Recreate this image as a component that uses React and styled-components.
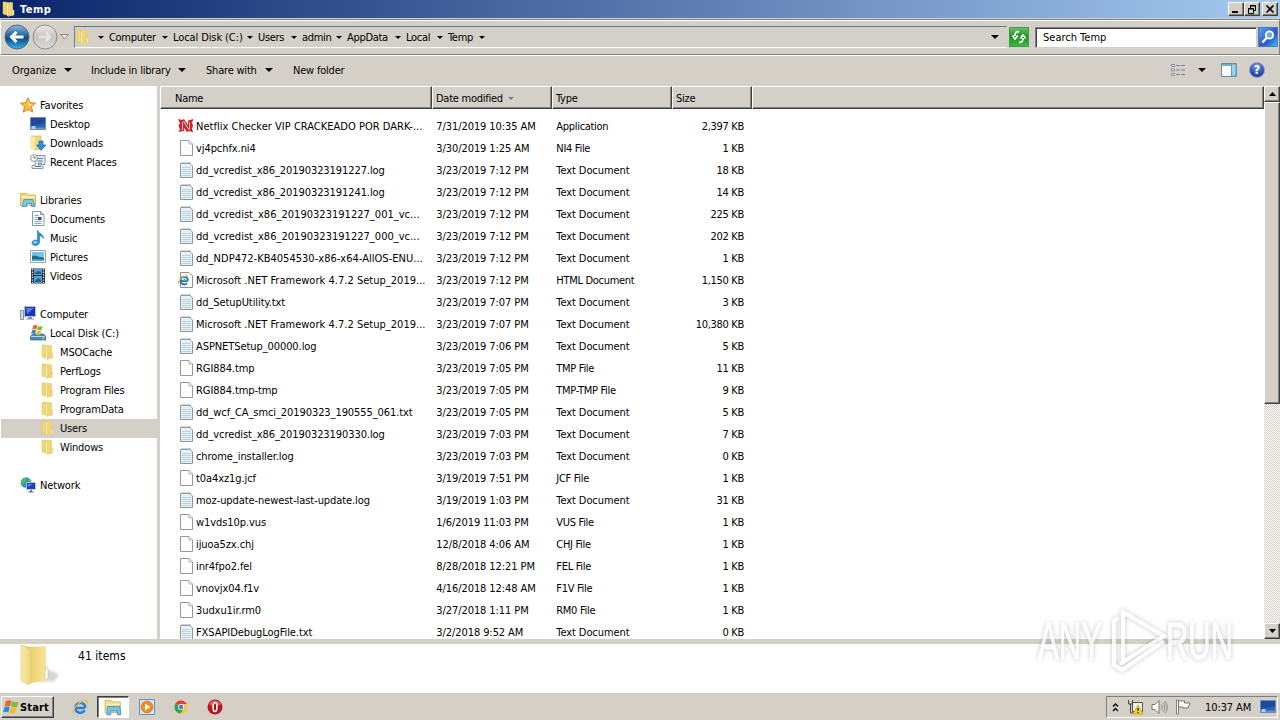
import styled, { createGlobalStyle, css } from "styled-components";

const GlobalStyle = createGlobalStyle`
  * {
    box-sizing: border-box;
  }
  body {
    margin: 0;
    overflow: hidden;
    background: #d4d0c8;
    font-family: "DejaVu Sans Condensed", "DejaVu Sans", sans-serif;
    font-stretch: condensed;
    font-size: 11px;
    letter-spacing: -0.2px;
    color: #000;
  }
  svg {
    display: block;
    flex: none;
    overflow: visible;
  }
`;

const raised = css`
  border: 1px solid;
  border-color: #fff #404040 #404040 #fff;
  box-shadow: inset -1px -1px 0 #808080;
  background: #d4d0c8;
`;

const Window = styled.div`
  width: 1280px;
  height: 720px;
  display: flex;
  flex-direction: column;
  overflow: hidden;
  white-space: nowrap;
`;

const TitleBar = styled.div`
  height: 18px;
  flex: none;
  display: flex;
  align-items: center;
  padding: 0 2px 0 1px;
  background: linear-gradient(90deg, #0a246a, #a6caf0);
`;
const Title = styled.span`
  flex: 1;
  margin-left: 3px;
  color: #fff;
  font-weight: bold;
  letter-spacing: 0.5px;
`;
const CaptionButton = styled.div`
  ${raised}
  width: 16px;
  height: 14px;
  margin-left: ${(p) => p.$gap || 0}px;
  display: flex;
  align-items: center;
  justify-content: center;
`;

const NavBar = styled.div`
  height: 36px;
  flex: none;
  margin-top: 1px;
  border: 1px solid #808080;
  border-left-color: #fff;
  box-shadow: inset 0 1px 0 #fff, 0 1px 0 #fff;
  display: flex;
  align-items: center;
  padding: 0 1px 0 3px;
`;
const NavGap = styled.div`
  width: ${(p) => p.$w}px;
  flex: none;
`;
const AddressBox = styled.div`
  flex: 1;
  height: 22px;
  margin: 0 2px 0 5px;
  padding-right: 7px;
  border: 1px solid;
  border-color: #5f7a80 #d4d0c8 #fff #6d8388;
  display: flex;
  align-items: center;
`;
const Crumb = styled.span`
  width: ${(p) => p.$w}px;
  flex: none;
  display: flex;
  align-items: center;
  justify-content: space-between;
  padding-right: 5px;
  letter-spacing: ${(p) => p.$ls ?? -0.3}px;
`;
const Caret = styled.i`
  flex: none;
  width: 0;
  height: 0;
  border: ${(p) => p.$s || 3}px solid transparent;
  border-top-color: ${(p) => p.$c || "#000"};
  border-bottom: 0;
  margin-left: ${(p) => p.$ml || 0}px;
`;
const HistoryCaret = styled(Caret)`
  margin-left: auto;
`;
const RefreshButton = styled.div`
  width: 20px;
  height: 20px;
  flex: none;
  margin-right: 6px;
  display: flex;
  align-items: center;
  justify-content: center;
  background: linear-gradient(#63c165, #1c8f20 50%, #36c03a);
  border: 1px solid #4d9457;
`;
const SearchBox = styled.div`
  width: 222px;
  height: 21px;
  flex: none;
  background: #fff;
  border: 1px solid #808080;
  border-right-color: #d4d0c8;
  border-bottom-color: #d4d0c8;
  box-shadow: inset 1px 1px 0 #404040;
  padding: 3px 0 0 7px;
  line-height: 14px;
  letter-spacing: 0;
`;
const SearchButton = styled.div`
  width: 20px;
  height: 20px;
  flex: none;
  margin-left: 1px;
  border: 1px solid #4477c4;
  background: linear-gradient(135deg, #5ba4ee, #2a55c8 60%, #30c8ea);
  display: flex;
  align-items: center;
  justify-content: center;
`;

const ToolBar = styled.div`
  height: 30px;
  margin-bottom: 1px;
  flex: none;
  display: flex;
  align-items: center;
  padding: 0 15px 0 12px;
`;
const ToolItem = styled.div`
  width: ${(p) => p.$w}px;
  display: flex;
  align-items: center;
  justify-content: space-between;
  margin-right: ${(p) => p.$mr}px;
  letter-spacing: ${(p) => p.$ls ?? -0.2}px;
`;
const ToolIcons = styled.div`
  margin-left: auto;
  display: flex;
  align-items: center;
`;

const Body = styled.div`
  height: 553px;
  flex: none;
  display: flex;
  background: #fff;
`;
const Sidebar = styled.div`
  width: 160px;
  flex: none;
  padding-top: 10px;
  border-right: 3px solid #d4d0c8;
`;
const TreeRow = styled.div`
  height: 19px;
  margin-left: 1px;
  padding-left: ${(p) => 19 + p.$level * 10}px;
  display: flex;
  align-items: center;
  gap: 4px;
  background: ${(p) => (p.$selected ? "#d4d0c8" : "none")};
  letter-spacing: -0.15px;
`;
const TreeIcon = styled.span`
  width: 16px;
  height: 18px;
`;

const FileArea = styled.div`
  flex: 1;
  min-width: 0;
  display: flex;
  flex-direction: column;
  overflow: hidden;
`;
const HeaderRow = styled.div`
  height: 23px;
  flex: none;
  display: flex;
  background: #d4d0c8;
`;
const HeaderCell = styled.div`
  ${(p) => (p.$w ? `width: ${p.$w}px;` : "flex: 1;")}
  padding: 1px 0 0 ${(p) => p.$pl || 4}px;
  display: flex;
  align-items: center;
  border: 1px solid;
  border-color: #fff #404040 #404040 #fff;
  box-shadow: inset -1px -1px 0 #808080;
  letter-spacing: -0.25px;
`;
const FileRows = styled.div`
  padding-top: 6px;
`;
const FileRow = styled.div`
  height: 22px;
  flex: none;
  display: grid;
  grid-template-columns: 16px 241px 120px 109px 80px;
  align-items: center;
  padding-left: 18px;
`;
const Cell = styled.span`
  padding-left: ${(p) => p.$pl ?? 1.3}px;
  text-align: ${(p) => p.$align || "left"};
  letter-spacing: ${(p) => p.$ls ?? -0.08}px;
`;

const ScrollBar = styled.div`
  width: 16px;
  flex: none;
  display: flex;
  flex-direction: column;
  background: repeating-conic-gradient(#fff 0 25%, #d4d0c8 0 50%) 0 0 / 2px 2px;
`;
const ScrollButton = styled.div`
  ${raised}
  height: 16px;
  margin-top: ${(p) => (p.$end ? "auto" : 0)};
  display: flex;
  align-items: center;
  justify-content: center;
`;
const ScrollThumb = styled.div`
  ${raised}
  height: 302px;
`;

const Details = styled.div`
  height: 54px;
  flex: none;
  display: flex;
  background: #fff;
  border-top: 5px solid #d4d0c8;
  padding-left: 18px;
`;
const ItemCount = styled.span`
  margin: 4px 0 0 18px;
  font-size: 12px;
  line-height: 16px;
  letter-spacing: 0.05px;
`;

const TaskBar = styled.div`
  flex: 1;
  display: flex;
  align-items: center;
  padding: 1px 2px 0 1px;
  background: #d4d0c8;
  border-top: 1px solid #fff;
  margin-top: -1px;
`;
const StartButton = styled.div`
  ${raised}
  width: 53px;
  height: 22px;
  display: flex;
  align-items: center;
  gap: 1px;
  padding-left: 1px;
  font-weight: bold;
  letter-spacing: 0.15px;
`;
const TaskItem = styled.div`
  width: 32px;
  height: 22px;
  margin-left: ${(p) => p.$ml ?? 2}px;
  display: flex;
  align-items: center;
  justify-content: center;
  ${(p) =>
    p.$active &&
    css`
      background: #fff;
      border: 1px solid;
      border-color: #404040 #fff #fff #404040;
      box-shadow: inset 1px 1px 0 #808080;
    `}
`;
const Tray = styled.div`
  width: 172px;
  height: 22px;
  margin-left: auto;
  display: flex;
  align-items: center;
  gap: 8px;
  padding-left: 5px;
  border: 1px solid;
  border-color: #808080 #fff #fff #808080;
`;
const Clock = styled.span`
  margin-left: 6px;
  width: 47px;
  letter-spacing: -0.1px;
`;

const Watermark = styled.div`
  position: absolute;
  left: 1036px;
  top: 606px;
  filter: drop-shadow(0 0 2.5px rgba(0, 0, 0, 0.3));
  opacity: 0.75;
`;

const HelpMark = styled.div`
  width: 16px;
  height: 16px;
  border-radius: 50%;
  border: 1px solid #8d98b4;
  background: radial-gradient(circle at 50% 25%, #7fa3ea, #2346ac 65%);
  color: #fff;
  font-size: 12px;
  font-weight: bold;
  line-height: 14px;
  text-align: center;
  letter-spacing: 0;
`;

/* ---------- icons ---------- */

const Svg = ({ w = 16, h = 16, box, children }) => (
  <svg width={w} height={h} viewBox={box || "0 0 16 16"} fill="none">
    {children}
  </svg>
);

const Folder = () => (
  <Svg>
    <path d="M6 1.500h5.500v12.500H6z" fill="#f3dc84" stroke="#e0c05c" strokeWidth=".5" />
    <path d="M2 1h3.500v13L2 13z" fill="#f2d974" stroke="#dfbb55" strokeWidth=".5" />
    <path d="M5.500 1.500L7.500 3v12.500l-2-1.500z" fill="#fdf3c0" stroke="#d9b555" strokeWidth=".5" />
    <path d="M11.500 2v6l1.500 1.500v4.500L7.500 15.500V3z" fill="#f0d372" />
    <path d="M11.500 9.500l1.500-.5v5l-1.500.5z" fill="#fff6cd" stroke="#c9b064" strokeWidth=".4" />
  </Svg>
);

const BigFolder = () => (
  <Svg w={42} h={44} box="0 0 42 44">
    <defs>
      <linearGradient id="bf1" x1="0" x2="1">
        <stop offset="0" stopColor="#e3c25a" />
        <stop offset="1" stopColor="#f8e79c" />
      </linearGradient>
      <linearGradient id="bf2" x1="0" x2="1">
        <stop offset="0" stopColor="#f9ecb0" />
        <stop offset="1" stopColor="#eed47a" />
      </linearGradient>
      <filter id="soft"><feGaussianBlur stdDeviation="1.5" /></filter>
    </defs>
    <path d="M24 22l17 9-5 6-14 1z" fill="#aaa" opacity=".5" filter="url(#soft)" />
    <path d="M3 1l8 2 17-1v22l2 3v9l-3 1-15 2z" fill="url(#bf1)" />
    <path d="M3 1l7 3c2 1 3 2 3 5v28c0 3-1 4-3 3.500L3 37z" fill="url(#bf2)" stroke="#dfc66e" strokeWidth=".6" />
    <path d="M28 22l2 4v8l-3 2v-8z" fill="#fffbe6" stroke="#c6cfae" strokeWidth=".6" />
  </Svg>
);

const Star = () => (
  <Svg>
    <path d="M8 .8l2.200 4.900 5.300.5-4 3.500 1.200 5.400L8 12.300l-4.700 2.800 1.200-5.400-4-3.500 5.300-.5z" fill="#fdba3d" stroke="#d8832a" />
    <path d="M8 3l1.300 3.800 3.400.4-3 1.800L8 8z" fill="#ffe892" />
  </Svg>
);
const Desktop = () => (
  <Svg>
    <path d="M.5 1.500h15v12H.5z" fill="#2563bd" stroke="#6a8cae" />
    <path d="M1 2h14v5C9 9 5 8 1 11z" fill="#1f489f" />
    <path d="M1 11.500h14V13H1z" fill="#6d93b5" />
    <path d="M1.500 10h4v3h-4z" fill="#a9d2e8" />
  </Svg>
);
const Downloads = () => (
  <Svg>
    <path d="M1 1h10v13l-6 1-4-2z" fill="#f1d777" stroke="#d2ae4b" strokeWidth=".6" />
    <path d="M1 1l4 2v12l-4-2z" fill="#fbecad" />
    <path d="M9 6h4v4h3l-5 5.500L6.500 10H9z" fill="#2f91d8" stroke="#1c65a8" strokeWidth=".7" />
  </Svg>
);
const Recent = () => (
  <Svg>
    <path d="M6 1.500h9v9h-2v4H2v-3h3z" fill="#dfeaf0" stroke="#8498a5" />
    <path d="M7.500 4.500h5M7.500 7h5M5 12.500h6" stroke="#5f7e92" />
    <path d="M8.500 9h3v2h-3z" stroke="#58788f" strokeWidth=".8" />
    <circle cx="4" cy="4" r="3.400" fill="#f5f8fa" stroke="#8e9ba6" />
    <path d="M4 2v2h2" stroke="#55626e" strokeWidth=".8" />
  </Svg>
);
const Libraries = () => (
  <Svg>
    <path d="M.5 1.500h6l1 1.500h8v10.500H.5z" fill="#f4db7b" stroke="#cfab45" strokeWidth=".8" />
    <path d="M1 5h14" stroke="#fff3b5" strokeWidth="1.500" />
    <path d="M4 7.500h9l2 7h-3.500v-3h-5v3H2z" fill="#7ac5ea" stroke="#3a8ec4" strokeWidth=".8" />
  </Svg>
);
const Documents = () => (
  <Svg>
    <path d="M2.500.5h8l3.500 3.500v10.500H2.500z" fill="#fff" stroke="#8796a6" />
    <path d="M10.500.5v3h3" stroke="#8796a6" />
    <path d="M4.500 4.500h4M4.500 6.500h3M4.500 8.500h3M4.500 10.500h7M4.500 12.500h7" stroke="#86a4c2" />
    <path d="M8 6h3.500v3H8z" fill="#224e8f" />
  </Svg>
);
const Music = () => (
  <Svg>
    <path d="M8 .5c0 3 5.500 3 5.500 8-1-2.500-3-2.500-4-2.500v6c0 4.500-7.500 4.500-7.500.8C2 10 6 9.500 7.500 10.500V.5z" fill="#2c93d5" stroke="#1b6faf" strokeWidth=".6" />
    <ellipse cx="5.300" cy="12.300" rx="2.200" ry="1.400" fill="#85d1f5" />
  </Svg>
);
const Pictures = () => (
  <Svg>
    <path d="M.5 1.500h15v12H.5z" fill="#fff" stroke="#93a3b1" />
    <path d="M2 3h12v9H2z" fill="#77c2e8" />
    <path d="M2 7c3-2 6 1.500 12 1.500V12H2z" fill="#216e76" />
    <path d="M2 10.500c5-1 8 0 12 0V12H2z" fill="#4da6c8" />
  </Svg>
);
const Videos = () => (
  <Svg>
    <path d="M1 .5h14v15H1z" fill="#26313b" />
    <path d="M4 1h8v6H4zM4 8h8v7H4z" fill="#4da0cf" />
    <path d="M5 5l3-2 3 1v2H5zM5 13l3-3 3 2v2H5z" fill="#245e83" />
    <path d="M2.500 1v14M13.500 1v14" stroke="#dfe6ea" strokeWidth="1.300" strokeDasharray="1.300 1.300" />
  </Svg>
);
const Computer = () => (
  <Svg>
    <path d="M.5 4.500h3v9h-3z" fill="#d4dbe0" stroke="#8795a0" />
    <path d="M4.500 .5h11v10h-11z" fill="#1b36b5" stroke="#b4bfcb" />
    <path d="M6 2h8L7 8z" fill="#5580e4" />
    <path d="M8 11h4v2H8zM6 12.500h8v1H6z" fill="#8a96a3" />
  </Svg>
);
const Flag = () => (
  <Svg>
    <path d="M3 2c2-1.300 4-.8 5.500.1L7 7.500c-1.600-1-3.500-1-5.300 0z" fill="#ed6327" />
    <path d="M9 2.500c2 1 4.500.8 6.500 0L14 8c-2 .8-4 .6-5.800-.4z" fill="#83b936" />
    <path d="M1.500 8.300C3.300 7.200 5 7.300 6.800 8.300l-1.500 5.200c-1.600-1-3.500-1-5.300 0z" fill="#2f88d8" />
    <path d="M7.900 8.500c1.700 1 3.700 1 5.800.2l-1.600 5.300c-2 .8-3.900.7-5.600-.3z" fill="#f7bd27" />
  </Svg>
);
const Disk = () => (
  <Svg>
    <path d="M.5 11l3-2h10l2 2v4H.5z" fill="#4d88b4" stroke="#33658b" strokeWidth=".7" />
    <path d="M1 11.500h14" stroke="#b7d6ea" />
    <circle cx="13" cy="13.500" r=".9" fill="#92f28a" />
    <g transform="translate(1 -1) scale(.75)">
      <Flag />
    </g>
  </Svg>
);
const Network = () => (
  <Svg>
    <circle cx="6" cy="5.500" r="5.300" fill="#2992d4" />
    <path d="M3 1.500c3-1 4 0 3 2S3 5 3.500 8C1 7 .5 4 3 1.500zM8 2l3 2-2 3z" fill="#5bbf47" />
    <path d="M6.500 5.500h9v7h-9z" fill="#1c3fbc" stroke="#b9c6d4" />
    <path d="M8 7h5L8 10z" fill="#5f8aea" />
    <path d="M10 13h2v1.500h2v1H8v-1h2z" fill="#687785" />
  </Svg>
);

const BlankFile = () => (
  <Svg>
    <path d="M2.500.5h8.500l3.500 3.500v11.500h-12z" fill="#fdfdfd" stroke="#989898" />
    <path d="M11 .5V4h3.500" fill="#eee" stroke="#a5a5a5" strokeWidth=".8" />
  </Svg>
);
const TextFile = () => (
  <Svg>
    <path d="M2.500 1.500h9.500l2.500 2.500v11.500h-12z" fill="#e8f1f5" stroke="#8b979d" />
    <path d="M4 5.500h9M4 7.500h9M4 9.500h9M4 11.500h9M4 13.500h9" stroke="#b6cfda" strokeWidth=".9" />
    <path d="M3.500 1h9" stroke="#9aa2a6" strokeWidth="2" strokeDasharray="1 1" />
  </Svg>
);
const HtmlFile = () => (
  <Svg>
    <path d="M2.500.5h8.500l3.500 3.500v11.500h-12z" fill="#fff" stroke="#8f8f8f" />
    <path d="M9.800 9H3M9 11.300C6 13.800 2 11.500 2.500 8.100c.6-4.100 7.500-4.700 7.400.6" stroke="#2675cc" strokeWidth="2" />
    <path d="M.5 12C-.5 9 5.500 3.500 10 3.500" stroke="#e9b52c" strokeWidth="1.200" />
    <path d="M6.500 6.500l3 2.500h-5z" fill="#69b63f" />
  </Svg>
);
const NetflixFile = () => (
  <Svg>
    <path d="M0 1l4 1 2-1 4 6V2.500L15.500 1 14 4.500 15 8l-1 3 1.200 3.500-4-1.500L9 14 6 10v3L.5 14 2 11 .5 8 2 5z" fill="#d3222b" />
    <path d="M4.500 4v8M5.500 3l5.500 9M11.500 4v7" stroke="#fff" strokeWidth=".8" />
  </Svg>
);

const Explorer = () => (
  <Svg w={18} h={18}>
    <path d="M1 2h5l1 1.500h7.500v9.500H1z" fill="#f6df86" stroke="#cda646" strokeWidth=".7" />
    <path d="M2 5.500h12" stroke="#fff6c8" />
    <path d="M3 7.500h11l1 7.500h-3v-3.500H6V15H2.500z" fill="#74c1ea" stroke="#438fbd" strokeWidth=".7" />
  </Svg>
);
const IE = () => (
  <Svg>
    <path d="M13 9H4.500M12.700 11.300C9.500 16 3 13.500 3.500 8.500c.6-6 10-6 9.900.3" stroke="#2583d4" strokeWidth="2.600" />
    <path d="M2 14.500C-1 11 9 0 14.500 1.500c1.300.7.8 2.200.2 3" stroke="#efbd35" strokeWidth="1.300" />
  </Svg>
);
const MediaPlayer = () => (
  <Svg>
    <path d="M.5.500h15v15H.5z" fill="#d5e8f7" stroke="#5f93c7" />
    <circle cx="8" cy="8" r="6" fill="#f58a1f" stroke="#d96d10" strokeWidth=".6" />
    <path d="M6 4.500l5.500 3.500L6 11.500z" fill="#fff" />
  </Svg>
);
const Chrome = () => (
  <Svg w={14} h={14}>
    <circle cx="8" cy="8" r="7.500" fill="#f7cb32" />
    <path d="M8 8L1.500 4.200A7.500 7.500 0 0 1 14.600 4.500H8z" fill="#dd4437" />
    <path d="M8 8L1.500 4.200A7.500 7.500 0 0 0 7.600 15.500L11 9.700z" fill="#31a552" />
    <circle cx="8" cy="8" r="3.500" fill="#fff" />
    <circle cx="8" cy="8" r="2.700" fill="#427fed" />
  </Svg>
);
const Opera = () => (
  <Svg>
    <circle cx="8" cy="8" r="7.500" fill="#b8161c" />
    <path d="M2 5a7 7 0 0 1 12 0C11 8 5 8 2 5z" fill="#e45a58" />
    <ellipse cx="8" cy="8" rx="1.900" ry="4.500" fill="#a30c12" stroke="#fff" strokeWidth="1.700" />
  </Svg>
);

const NavArrow = ({ active }) => (
  <Svg w={26} h={26} box="0 0 26 26">
    <defs>
      <linearGradient id="nav" x2="0" y2="1">
        <stop offset="0" stopColor="#8fb9d8" />
        <stop offset=".45" stopColor="#22659f" />
        <stop offset=".55" stopColor="#0c4b87" />
        <stop offset="1" stopColor="#37b6e4" />
      </linearGradient>
      <linearGradient id="navOff" x2="0" y2="1">
        <stop offset="0" stopColor="#ecebe8" />
        <stop offset=".5" stopColor="#c6c4bf" />
        <stop offset="1" stopColor="#dedcd8" />
      </linearGradient>
    </defs>
    <circle cx="13" cy="13" r="12" fill={active ? "url(#nav)" : "url(#navOff)"} stroke={active ? "#4b6a83" : "#908e8a"} />
    {active ? (
      <path d="M19.500 13H8M12.500 8l-5 5 5 5" stroke="#fff" strokeWidth="3" />
    ) : (
      <path d="M7 13h11M13.500 8.500L18 13l-4.500 4.500" stroke="#e6e4e1" strokeWidth="2.500" />
    )}
  </Svg>
);

const icons = { blank: BlankFile, text: TextFile, html: HtmlFile, netflix: NetflixFile };

const crumbs = [
  ["Computer", 64],
  ["Local Disk (C:)", 85, -0.1],
  ["Users", 44],
  ["admin", 45],
  ["AppData", 59],
  ["Local", 42],
  ["Temp", 42],
];

const tree = [
  ["Favorites", 0, Star],
  ["Desktop", 1, Desktop],
  ["Downloads", 1, Downloads],
  ["Recent Places", 1, Recent],
  null,
  ["Libraries", 0, Libraries],
  ["Documents", 1, Documents],
  ["Music", 1, Music],
  ["Pictures", 1, Pictures],
  ["Videos", 1, Videos],
  null,
  ["Computer", 0, Computer],
  ["Local Disk (C:)", 1, Disk],
  ["MSOCache", 2, Folder],
  ["PerfLogs", 2, Folder],
  ["Program Files", 2, Folder],
  ["ProgramData", 2, Folder],
  ["Users", 2, Folder],
  ["Windows", 2, Folder],
  null,
  ["Network", 0, Network],
];

const files = [
  ["netflix", "Netflix Checker VIP CRACKEADO POR DARK-...", "7/31/2019 10:35 AM", "Application", "2,397 KB"],
  ["blank", "vj4pchfx.ni4", "3/30/2019 1:25 AM", "NI4 File", "1 KB"],
  ["text", "dd_vcredist_x86_20190323191227.log", "3/23/2019 7:12 PM", "Text Document", "18 KB"],
  ["text", "dd_vcredist_x86_20190323191241.log", "3/23/2019 7:12 PM", "Text Document", "14 KB"],
  ["text", "dd_vcredist_x86_20190323191227_001_vc...", "3/23/2019 7:12 PM", "Text Document", "225 KB"],
  ["text", "dd_vcredist_x86_20190323191227_000_vc...", "3/23/2019 7:12 PM", "Text Document", "202 KB"],
  ["text", "dd_NDP472-KB4054530-x86-x64-AllOS-ENU...", "3/23/2019 7:12 PM", "Text Document", "1 KB"],
  ["html", "Microsoft .NET Framework 4.7.2 Setup_2019...", "3/23/2019 7:12 PM", "HTML Document", "1,150 KB"],
  ["text", "dd_SetupUtility.txt", "3/23/2019 7:07 PM", "Text Document", "3 KB"],
  ["text", "Microsoft .NET Framework 4.7.2 Setup_2019...", "3/23/2019 7:07 PM", "Text Document", "10,380 KB"],
  ["text", "ASPNETSetup_00000.log", "3/23/2019 7:06 PM", "Text Document", "5 KB"],
  ["blank", "RGI884.tmp", "3/23/2019 7:05 PM", "TMP File", "11 KB"],
  ["blank", "RGI884.tmp-tmp", "3/23/2019 7:05 PM", "TMP-TMP File", "9 KB"],
  ["text", "dd_wcf_CA_smci_20190323_190555_061.txt", "3/23/2019 7:05 PM", "Text Document", "5 KB"],
  ["text", "dd_vcredist_x86_20190323190330.log", "3/23/2019 7:03 PM", "Text Document", "7 KB"],
  ["text", "chrome_installer.log", "3/23/2019 7:03 PM", "Text Document", "0 KB"],
  ["blank", "t0a4xz1g.jcf", "3/19/2019 7:51 PM", "JCF File", "1 KB"],
  ["text", "moz-update-newest-last-update.log", "3/19/2019 1:03 PM", "Text Document", "31 KB"],
  ["blank", "w1vds10p.vus", "1/6/2019 11:03 PM", "VUS File", "1 KB"],
  ["blank", "ijuoa5zx.chj", "12/8/2018 4:06 AM", "CHJ File", "1 KB"],
  ["blank", "inr4fpo2.fel", "8/28/2018 12:21 PM", "FEL File", "1 KB"],
  ["blank", "vnovjx04.f1v", "4/16/2018 12:48 AM", "F1V File", "1 KB"],
  ["blank", "3udxu1ir.rm0", "3/27/2018 1:11 PM", "RM0 File", "1 KB"],
  ["text", "FXSAPIDebugLogFile.txt", "3/2/2018 9:52 AM", "Text Document", "0 KB"],
];

// cut names run a little wider than the short ones
const nameSpacing = (name) => (name.endsWith("...") ? 0.02 : -0.08);
const typeSpacing = (type) => (type === "Text Document" ? -0.08 : -0.3);

export default function App() {
  return (
    <>
      <GlobalStyle />
      <Window>
        <TitleBar>
          <Folder />
          <Title>Temp</Title>
          <CaptionButton>
            <Svg w={10} h={8} box="0 0 10 8"><path d="M1 6h6v2H1z" fill="#000" /></Svg>
          </CaptionButton>
          <CaptionButton>
            <Svg w={10} h={9} box="0 0 10 9">
              <path d="M3.500 3V.5h5v5H7M3 1h6M1.500 3.500h5v5h-5zM1 4h6" stroke="#000" />
            </Svg>
          </CaptionButton>
          <CaptionButton $gap={2}>
            <Svg w={8} h={8} box="0 0 8 8"><path d="M.5.5l7 7M7.500.5l-7 7" stroke="#000" strokeWidth="1.600" /></Svg>
          </CaptionButton>
        </TitleBar>

        <NavBar>
          <NavArrow active />
          <NavGap $w={2} />
          <NavArrow />
          <NavGap $w={2} />
          <Svg w={9} h={6} box="0 0 9 6"><path d="M.5.5h8L4.500 5z" fill="#eee" stroke="#8d8b87" /></Svg>
          <AddressBox>
            <Folder />
            <Caret $ml={7} />
            <NavGap $w={5} />
            {crumbs.map(([name, w, ls]) => (
              <Crumb key={name} $w={w} $ls={ls}>
                {name}
                <Caret />
              </Crumb>
            ))}
            <HistoryCaret $s={4} />
          </AddressBox>
          <RefreshButton>
            <Svg w={16} h={14} box="0 0 16 14">
              <path d="M8 2C5 1 4 3 4 6M1.500 5.500L4 9l2.800-3.500M8 12c3 1 4-1 4-4M9.200 8.500L12 5l2.800 3.500" stroke="#fff" strokeWidth="1.800" />
            </Svg>
          </RefreshButton>
          <SearchBox>Search Temp</SearchBox>
          <SearchButton>
            <Svg>
              <circle cx="9.500" cy="6" r="3.700" stroke="#fff" strokeWidth="1.800" fill="#6fa9ee" />
              <path d="M6.500 9L2.500 13.500" stroke="#fff" strokeWidth="2.400" />
            </Svg>
          </SearchButton>
        </NavBar>

        <ToolBar>
          <ToolItem $w={60} $mr={19} $ls={-0.05}>Organize<Caret $s={4} /></ToolItem>
          <ToolItem $w={95} $mr={20}>Include in library<Caret $s={4} /></ToolItem>
          <ToolItem $w={67} $mr={20}>Share with<Caret $s={4} /></ToolItem>
          <ToolItem>New folder</ToolItem>
          <ToolIcons>
            <Svg>
              <path d="M1.500 2.500h3v2h-3zM1.500 7h3v2h-3zM1.500 11.500h3v2h-3z" fill="#fff" stroke="#7b858c" strokeWidth=".9" />
              <path d="M6 3.500h10M6 8h10M6 12.500h10" stroke="#7b858c" strokeDasharray="4 1" />
            </Svg>
            <Caret $s={4} $ml={12} />
            <NavGap $w={15} />
            <Svg>
              <path d="M.5 1.500h15v13H.5z" fill="#fff" stroke="#5d8eae" />
              <path d="M1 3h9" stroke="#75aecd" strokeWidth="2" />
              <path d="M10.500 2h4.500v12h-4.500z" fill="#9ed2ea" stroke="#5d9dbf" />
            </Svg>
            <NavGap $w={12} />
            <HelpMark>?</HelpMark>
          </ToolIcons>
        </ToolBar>

        <Body>
          <Sidebar>
            {tree.map((row, i) => {
              if (!row) return <TreeRow key={i} $level={0} />;
              const [name, level, Icon] = row;
              return (
                <TreeRow key={i} $level={level} $selected={name === "Users"}>
                  <TreeIcon><Icon /></TreeIcon>
                  {name}
                </TreeRow>
              );
            })}
          </Sidebar>
          <FileArea>
            <HeaderRow>
              <HeaderCell $w={272} $pl={14}>Name</HeaderCell>
              <HeaderCell $w={120} $pl={3}>
                Date modified
                <Caret $c="#808080" $ml={5} />
              </HeaderCell>
              <HeaderCell $w={120} $pl={3}>Type</HeaderCell>
              <HeaderCell $w={80} $pl={3}>Size</HeaderCell>
              <HeaderCell />
            </HeaderRow>
            <FileRows>
              {files.map(([icon, name, date, type, size]) => {
                const Icon = icons[icon];
                return (
                  <FileRow key={name + date}>
                    <Icon />
                    <Cell $pl={2} $ls={nameSpacing(name)}>{name}</Cell>
                    <Cell>{date}</Cell>
                    <Cell $ls={typeSpacing(type)}>{type}</Cell>
                    <Cell $align="right" $ls={-0.3}>{size}</Cell>
                  </FileRow>
                );
              })}
            </FileRows>
          </FileArea>
          <ScrollBar>
            <ScrollButton>
              <Svg w={7} h={4} box="0 0 7 4"><path d="M0 4h7L3.500 0z" fill="#000" /></Svg>
            </ScrollButton>
            <ScrollThumb />
            <ScrollButton $end>
              <Svg w={7} h={4} box="0 0 7 4"><path d="M0 0h7L3.500 4z" fill="#000" /></Svg>
            </ScrollButton>
          </ScrollBar>
        </Body>

        <Details>
          <BigFolder />
          <ItemCount>41 items</ItemCount>
        </Details>

        <TaskBar>
          <StartButton>
            <Flag />
            Start
          </StartButton>
          <TaskItem $ml={10}><IE /></TaskItem>
          <TaskItem $ml={1} $active><Explorer /></TaskItem>
          <TaskItem><MediaPlayer /></TaskItem>
          <TaskItem><Chrome /></TaskItem>
          <TaskItem><Opera /></TaskItem>
          <Tray>
            <Svg w={7} h={9} box="0 0 7 9">
              <path d="M1 3.500L3.500 1 6 3.500M1 8l2.500-2.500L6 8" stroke="#000" strokeWidth="1.300" />
            </Svg>
            <Svg>
              <path d="M5.500 3.500h10v9h-10z" fill="#eee" stroke="#555" />
              <path d="M1.500 1v4h4V1M3.500 5v9h5" stroke="#444" />
              <path d="M11 6l5 9H6z" fill="#ffd91c" stroke="#b39200" strokeWidth=".6" />
              <path d="M11 9v3M11 13v1" stroke="#000" strokeWidth="1.200" />
            </Svg>
            <Svg>
              <path d="M1 5.500h3l4-4v13l-4-4H1z" fill="#fff" stroke="#666" strokeWidth=".9" />
              <path d="M10 5.500c1.500 1.500 1.500 3.500 0 5M12 3.500c2.500 3 2.500 6 0 9M14 2c3 4 3 8 0 12" stroke="#777" strokeWidth=".9" />
            </Svg>
            <Svg>
              <path d="M1.500 1h2v14h-2z" fill="#fff" stroke="#666" strokeWidth=".8" />
              <path d="M3.500 2h6v2h5.500l-2 5H8V8H3.500z" fill="#fff" stroke="#666" strokeWidth=".9" />
            </Svg>
            <Clock>10:37 AM</Clock>
            <Desktop />
          </Tray>
        </TaskBar>
      </Window>

      <Watermark>
        <svg width="200" height="70" viewBox="0 0 200 70">
          <g fontFamily="Liberation Sans" fontSize="51" fill="#fff" stroke="#fff" strokeWidth=".8" letterSpacing="0">
            <text x="2" y="53" textLength="64" lengthAdjust="spacingAndGlyphs">ANY</text>
            <text x="130" y="53" textLength="67" lengthAdjust="spacingAndGlyphs">RUN</text>
          </g>
          <path d="M87 54V6l41 24-44 28M82 12l-4 3v44l8 5 42-29" fill="none" stroke="#fff" strokeWidth="4" />
        </svg>
      </Watermark>
    </>
  );
}
